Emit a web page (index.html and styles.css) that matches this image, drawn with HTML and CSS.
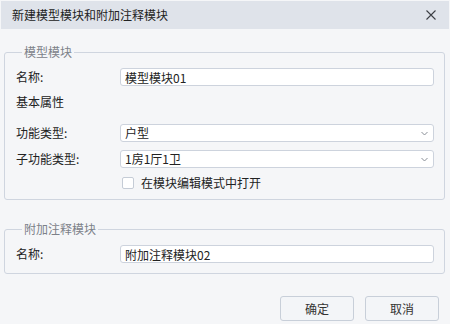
FILE: index.html
```html
<!DOCTYPE html>
<html lang="zh-CN">
<head>
  <meta charset="UTF-8">
  <title>新建模型模块和附加注释模块</title>
  <link rel="stylesheet" href="styles.css">
</head>
<body>
  <div class="dialog">
    <div class="title-bar">
      <span class="title">新建模型模块和附加注释模块</span>
      <svg class="close" width="10" height="10" viewBox="0 0 10 10">
        <path d="M0.5 0.5 L9.5 9.5 M9.5 0.5 L0.5 9.5" stroke="#3c3f44" stroke-width="1.1" fill="none"/>
      </svg>
    </div>

    <div class="content">
      <fieldset class="group first">
        <legend>模型模块</legend>
        <div class="row">
          <span class="label">名称:</span>
          <input class="field" type="text" value="模型模块01">
        </div>
        <div class="row section">
          <span class="label">基本属性</span>
        </div>
        <div class="row gap-lg">
          <span class="label">功能类型:</span>
          <div class="field select">
            <span>户型</span>
            <svg width="7" height="5" viewBox="0 0 7 5"><path d="M0.5 1 L3.5 4 L6.5 1" stroke="#8a8f97" fill="none"/></svg>
          </div>
        </div>
        <div class="row gap-md">
          <span class="label">子功能类型:</span>
          <div class="field select">
            <span>1房1厅1卫</span>
            <svg width="7" height="5" viewBox="0 0 7 5"><path d="M0.5 1 L3.5 4 L6.5 1" stroke="#8a8f97" fill="none"/></svg>
          </div>
        </div>
        <div class="row check-row">
          <span></span>
          <label class="check"><span class="box"></span>在模块编辑模式中打开</label>
        </div>
      </fieldset>

      <fieldset class="group second">
        <legend>附加注释模块</legend>
        <div class="row">
          <span class="label">名称:</span>
          <input class="field" type="text" value="附加注释模块02">
        </div>
      </fieldset>

      <div class="buttons">
        <button>确定</button>
        <button>取消</button>
      </div>
    </div>
  </div>
</body>
</html>
```

FILE: styles.css
```css
body {
  margin: 0;
  background-color: #f5f6f8;
  font-family: "Microsoft YaHei", "Noto Sans CJK SC", sans-serif;
  font-size: 12px;
  color: #222;
}

.dialog {
  width: 450px;
  height: 324px;
  box-sizing: border-box;
  padding-top: 1px;
}

.title-bar {
  display: flex;
  justify-content: space-between;
  align-items: center;
  height: 28px;
  margin: 0 1px;
  padding: 0 13px 0 11px;
  background-color: #dfe3ea;
}

.title {
  line-height: 16px;
  padding-bottom: 1px;
}

.close {
  display: block;
}

.content {
  padding: 16px 5px 0 4px;
}

.group {
  box-sizing: border-box;
  margin: 0;
  padding: 9px 10px 0 11px;
  border: 1px solid #cfd5df;
  border-radius: 3px;
}

.group.first {
  height: 155px;
}

.group.second {
  height: 52px;
  margin-top: 22px;
}

.group legend {
  padding: 0 2px;
  margin-left: 6px;
  color: #7c8189;
  line-height: 14px;
}

.row {
  display: grid;
  grid-template-columns: 104px 1fr;
  align-items: center;
  height: 18px;
}

.row.section {
  height: 20px;
  margin-top: 6px;
}

.row.gap-lg {
  margin-top: 12px;
}

.row.gap-md {
  margin-top: 8px;
}

.row.check-row {
  height: 14px;
  margin-top: 8px;
}

.label {
  line-height: 16px;
}

.field {
  box-sizing: border-box;
  width: 100%;
  height: 18px;
  margin: 0;
  padding: 0 4px;
  border: 1px solid #cdd3dd;
  border-radius: 3px;
  background-color: #fff;
  font: inherit;
  color: #222;
  line-height: 16px;
  outline: none;
}

.select {
  display: flex;
  justify-content: space-between;
  align-items: center;
  padding-right: 5px;
}

.select svg {
  display: block;
}

.check {
  display: flex;
  align-items: center;
  gap: 7px;
  margin-left: 2px;
  line-height: 14px;
}

.box {
  width: 10px;
  height: 10px;
  border: 1px solid #c5ccd6;
  border-radius: 2px;
  background-color: #fff;
}

.buttons {
  display: flex;
  justify-content: flex-end;
  gap: 11px;
  margin-top: 22px;
  padding-right: 6px;
}

button {
  width: 74px;
  height: 25px;
  padding: 0;
  border: 1px solid #c8cfd9;
  border-radius: 3px;
  background-color: #f3f5f8;
  font: inherit;
  color: #333;
}
```
